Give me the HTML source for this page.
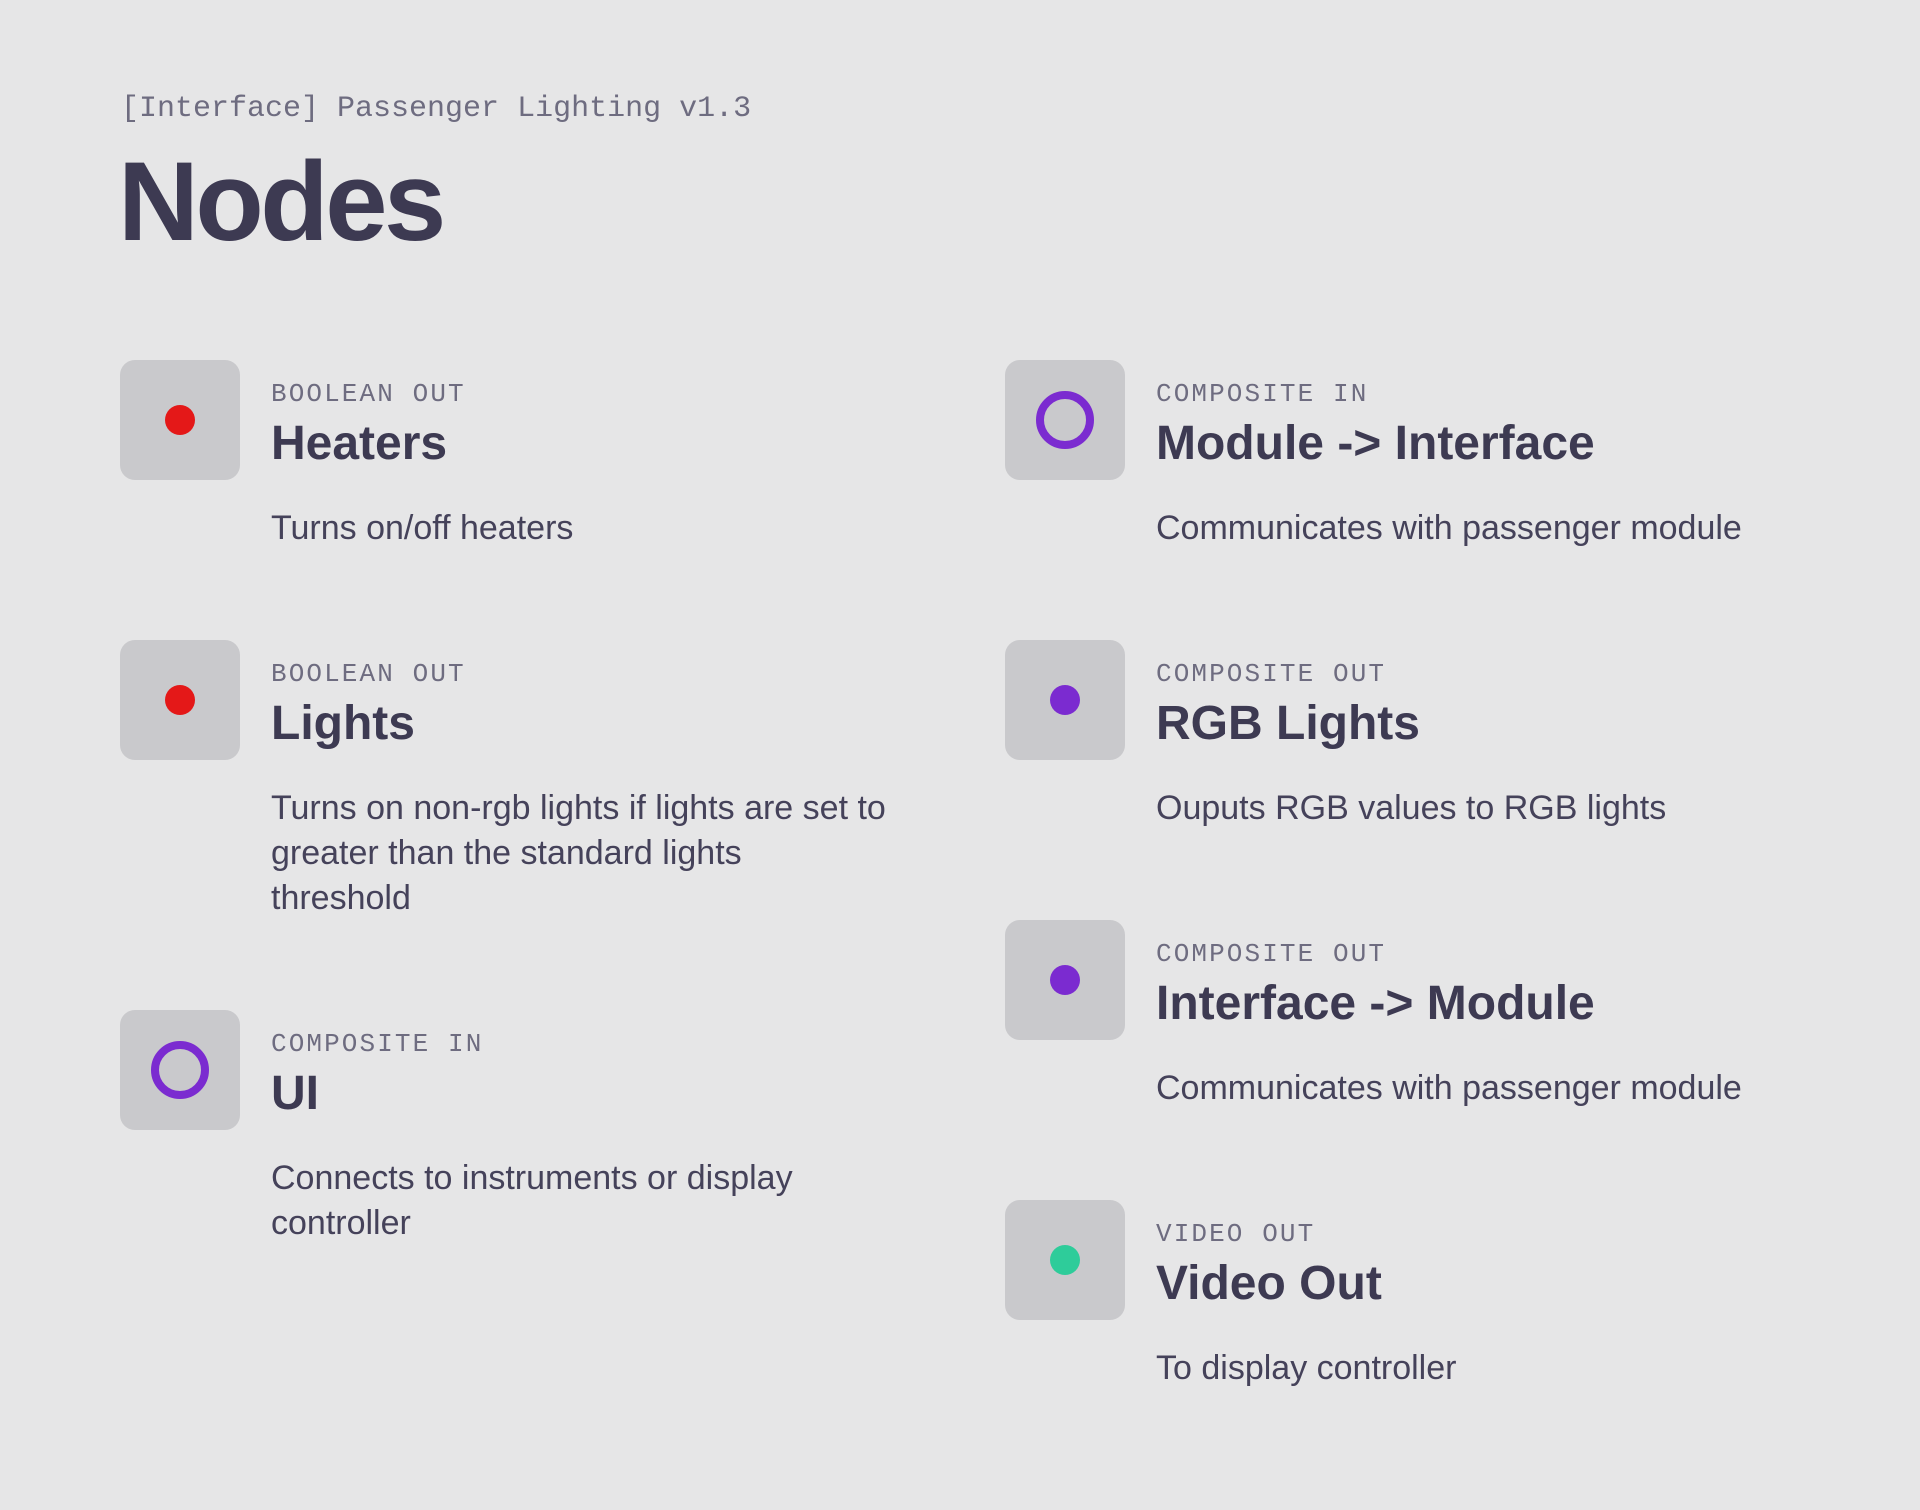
<!DOCTYPE html>
<html><head><meta charset="utf-8"><style>
html,body{margin:0;padding:0}
body{width:1920px;height:1510px;background:#e6e6e7;position:relative;overflow:hidden;font-family:"Liberation Sans",sans-serif;color:#3d3a52}
.sub{position:absolute;left:121px;top:90px;font-family:"Liberation Mono",monospace;font-size:30px;color:#6e6c80;line-height:38px}
.h1{position:absolute;left:118px;top:142px;font-size:112px;font-weight:bold;line-height:120px;letter-spacing:-3.5px;color:#3d3a52}
.item{position:absolute;width:760px;height:300px}
.box{position:absolute;left:0;top:0;width:120px;height:120px;border-radius:15px;background:#c9c9cc}
.dot{position:absolute;left:45px;top:45px;width:30px;height:30px;border-radius:50%}
.ring{position:absolute;left:31px;top:31px;width:42px;height:42px;border-radius:50%;border:8px solid #7b2bd0}
.lab{position:absolute;left:151px;top:18px;font-family:"Liberation Mono",monospace;font-size:26px;letter-spacing:2.1px;color:#6e6c80;line-height:32px}
.tit{position:absolute;left:151px;top:52px;font-size:48px;font-weight:bold;line-height:64px;color:#3d3a52}
.desc{position:absolute;left:151px;top:146px;font-size:34px;line-height:45px;color:#45425a;width:650px}
</style></head><body>
<div class="sub">[Interface] Passenger Lighting v1.3</div>
<div class="h1">Nodes</div>

<div class="item" style="left:120px;top:360px"><div class="box"><div class="dot" style="background:#e41818"></div></div><div class="lab">BOOLEAN OUT</div><div class="tit">Heaters</div><div class="desc">Turns on/off heaters</div></div>

<div class="item" style="left:120px;top:640px"><div class="box"><div class="dot" style="background:#e41818"></div></div><div class="lab">BOOLEAN OUT</div><div class="tit">Lights</div><div class="desc">Turns on non-rgb lights if lights are set to<br>greater than the standard lights<br>threshold</div></div>

<div class="item" style="left:120px;top:1010px"><div class="box"><div class="ring"></div></div><div class="lab">COMPOSITE IN</div><div class="tit">UI</div><div class="desc" style="width:580px">Connects to instruments or display controller</div></div>

<div class="item" style="left:1005px;top:360px"><div class="box"><div class="ring"></div></div><div class="lab">COMPOSITE IN</div><div class="tit">Module -&gt; Interface</div><div class="desc">Communicates with passenger module</div></div>

<div class="item" style="left:1005px;top:640px"><div class="box"><div class="dot" style="background:#7b2bd0"></div></div><div class="lab">COMPOSITE OUT</div><div class="tit">RGB Lights</div><div class="desc">Ouputs RGB values to RGB lights</div></div>

<div class="item" style="left:1005px;top:920px"><div class="box"><div class="dot" style="background:#7b2bd0"></div></div><div class="lab">COMPOSITE OUT</div><div class="tit">Interface -&gt; Module</div><div class="desc">Communicates with passenger module</div></div>

<div class="item" style="left:1005px;top:1200px"><div class="box"><div class="dot" style="background:#2ecc9a"></div></div><div class="lab">VIDEO OUT</div><div class="tit">Video Out</div><div class="desc">To display controller</div></div>
</body></html>
